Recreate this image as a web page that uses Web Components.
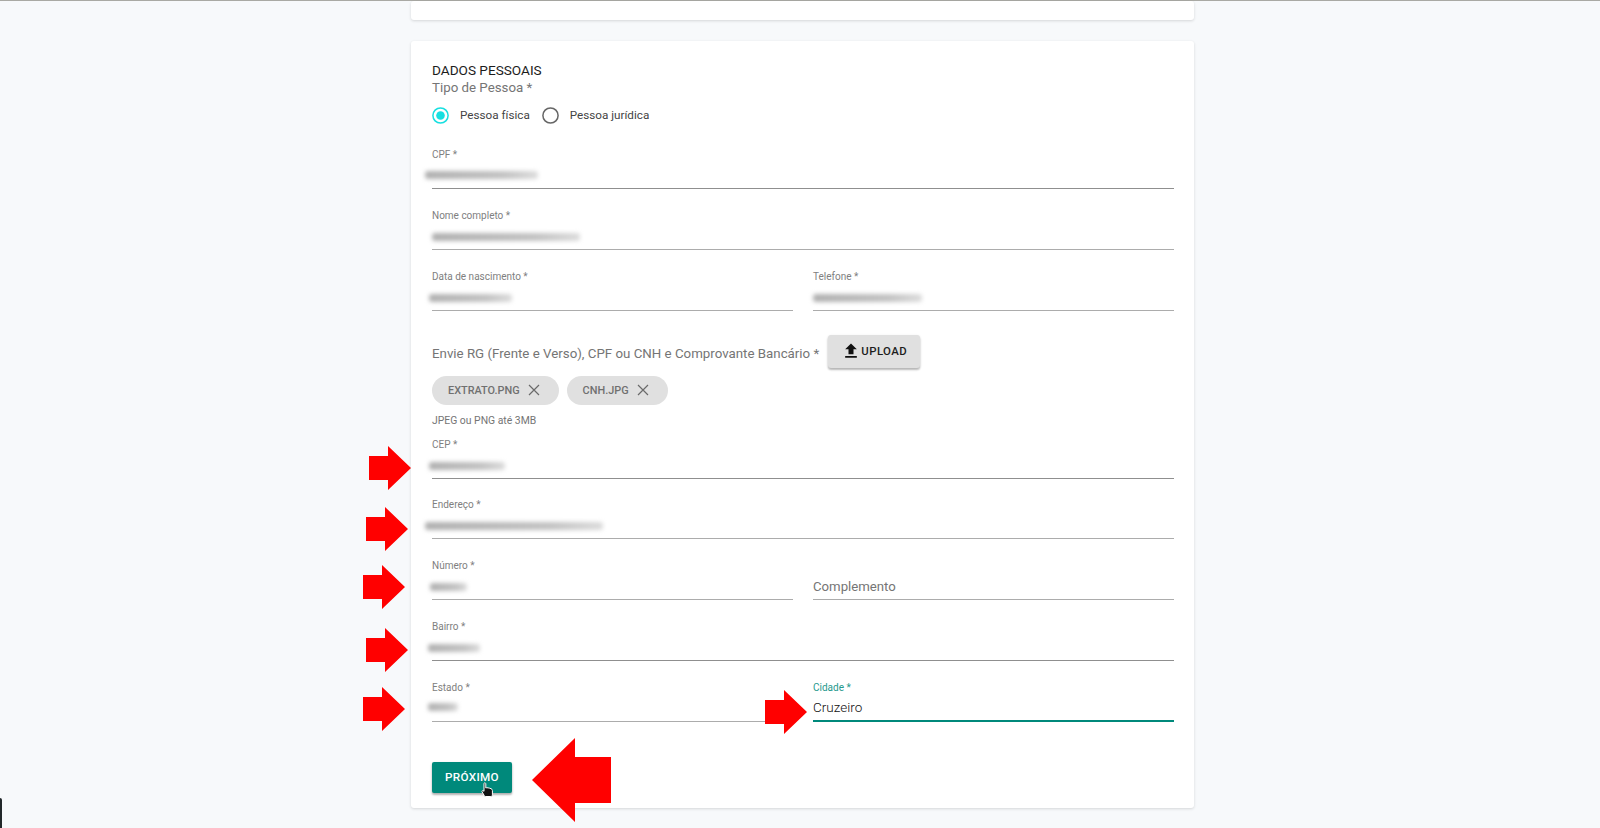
<!DOCTYPE html>
<html lang="pt-BR">
<head>
<meta charset="utf-8">
<title>Dados pessoais</title>
<style>
  html, body { margin: 0; height: 828px; overflow: hidden; }
  body {
    background: #f7f9fb;
    font-family: Roboto, "Liberation Sans", sans-serif;
    color: rgba(0, 0, 0, 0.87);
    position: relative;
  }
</style>
</head>
<body>
<form-page>
  <form-card slot="top"></form-card>
  <form-card>
    <div style="font-size:13.6px;line-height:17px;color:#1c1c1c">DADOS PESSOAIS</div>
    <div style="font-size:13.3px;line-height:17px;color:#757575">Tipo de Pessoa *</div>
    <div style="display:flex;gap:12px;margin-top:9px;height:20px">
      <radio-option checked>Pessoa física</radio-option>
      <radio-option>Pessoa jurídica</radio-option>
    </div>
    <field-row style="margin-top:23px"><text-field dark label="CPF *" blur="113" bx="-7" by="0"></text-field></field-row>
    <field-row><text-field label="Nome completo *" blur="148" bx="0" by="1"></text-field></field-row>
    <field-row>
      <text-field label="Data de nascimento *" blur="83" bx="-3" by="1"></text-field>
      <text-field label="Telefone *" blur="109" bx="0" by="1"></text-field>
    </field-row>
    <upload-row label="Envie RG (Frente e Verso), CPF ou CNH e Comprovante Bancário *">
      <file-chip>EXTRATO.PNG</file-chip>
      <file-chip>CNH.JPG</file-chip>
    </upload-row>
    <field-row class="tight"><text-field dark label="CEP *" blur="76" bx="-3" by="1"></text-field></field-row>
    <field-row><text-field label="Endereço *" blur="178" bx="-7" by="1"></text-field></field-row>
    <field-row>
      <text-field label="Número *" blur="37" bx="-2" by="1"></text-field>
      <text-field placeholder="Complemento"></text-field>
    </field-row>
    <field-row><text-field dark label="Bairro *" blur="52" bx="-4" by="1"></text-field></field-row>
    <field-row>
      <text-field label="Estado *" blur="30" bx="-4" by="-1"></text-field>
      <text-field label="Cidade *" value="Cruzeiro" focused></text-field>
    </field-row>
    <next-button>Próximo</next-button>
  </form-card>
</form-page>

<red-arrow x="369" y="446"></red-arrow>
<red-arrow x="366" y="507"></red-arrow>
<red-arrow x="363" y="565"></red-arrow>
<red-arrow x="366" y="628"></red-arrow>
<red-arrow x="363" y="687"></red-arrow>
<red-arrow x="765" y="690"></red-arrow>
<big-arrow></big-arrow>
<hand-cursor></hand-cursor>
<edge-sliver></edge-sliver>

<script>
class FormPage extends HTMLElement {
    constructor() {
        super();
        this.attachShadow({ mode: 'open' });
    }

    connectedCallback() {
        this.shadowRoot.innerHTML = `
      <style>
        :host { display: block; border-top: 1px solid #a9a9a4; }
        .col { display: flex; flex-direction: column; gap: 21px; width: 783px; margin-left: 411px; }
        ::slotted([slot="top"]) { height: 19px; padding: 0; }
      </style>
      <div class="col"><slot name="top"></slot><slot></slot></div>
    `;
    }
}

class FormCard extends HTMLElement {
    constructor() {
        super();
        this.attachShadow({ mode: 'open' });
    }

    connectedCallback() {
        this.shadowRoot.innerHTML = `
      <style>
        :host {
          display: block;
          box-sizing: border-box;
          background: #fff;
          border-radius: 3px;
          box-shadow: 0 1px 3px rgba(0, 0, 0, 0.14);
          padding: 21px 20px 15px 21px;
        }
      </style>
      <slot></slot>
    `;
    }
}

class RadioOption extends HTMLElement {
    constructor() {
        super();
        this.attachShadow({ mode: 'open' });
    }

    connectedCallback() {
        const on = this.hasAttribute('checked');
        const color = on ? '#17dfe0' : '#666666';
        this.shadowRoot.innerHTML = `
      <style>
        :host { display: flex; align-items: center; gap: 11px; font-size: 11.7px; color: #444; }
        svg { display: block; }
      </style>
      <svg width="17" height="17" viewBox="0 0 17 17" fill="none">
        <circle cx="8.5" cy="8.5" r="7.600" stroke="${color}" stroke-width="1.5"/>
        ${on ? `<circle cx="8.5" cy="8.500" r="4.300" fill="${color}"/>` : ''}
      </svg>
      <span><slot></slot></span>
    `;
    }
}

class FieldRow extends HTMLElement {
    constructor() {
        super();
        this.attachShadow({ mode: 'open' });
    }

    connectedCallback() {
        this.shadowRoot.innerHTML = `
      <style>
        :host { display: flex; gap: 20px; margin-top: 19.75px; }
        :host(.tight) { margin-top: 10px; }
        ::slotted(*) { flex: 1 1 0; min-width: 0; }
      </style>
      <slot></slot>
    `;
    }
}

class TextField extends HTMLElement {
    constructor() {
        super();
        this.attachShadow({ mode: 'open' });
    }

    connectedCallback() {
        const label = this.getAttribute('label');
        const value = this.getAttribute('value');
        const placeholder = this.getAttribute('placeholder');
        const blur = this.getAttribute('blur');
        const bx = this.getAttribute('bx') || 0;
        const by = this.getAttribute('by') || 0;
        this.shadowRoot.innerHTML = `
      <style>
        :host {
          display: block;
          box-sizing: border-box;
          height: 41px;
          border-bottom: 1px solid #acacac;
        }
        :host([dark]) { border-bottom-color: #8f8f8f; }
        :host([focused]) { border-bottom: 2px solid #00897b; }
        label { display: block; font-size: 10px; line-height: 14px; color: #808080; height: 14px; }
        :host([focused]) label { color: #26998d; }
        .value { font-size: 13.5px; font-weight: 300; line-height: 20px; margin-top: 2px; color: #111; height: 20px; }
        .placeholder { font-size: 13.2px; line-height: 20px; padding-top: 18px; color: #757575; }
        .blur {
          height: 8px;
          margin-top: 9px;
          background: linear-gradient(90deg, #b0b0b0, #c2c2c2 70%, #dcdcdc);
          filter: blur(2px);
          border-radius: 3px;
        }
      </style>
      ${label ? `<label>${label}</label>` : ''}
      ${placeholder ? `<div class="placeholder">${placeholder}</div>` : ''}
      ${value ? `<div class="value">${value}</div>` : ''}
      ${blur ? `<div class="blur" style="width:${blur}px;transform:translate(${bx}px,${by}px)"></div>` : ''}
    `;
    }
}

class UploadRow extends HTMLElement {
    constructor() {
        super();
        this.attachShadow({ mode: 'open' });
    }

    connectedCallback() {
        this.shadowRoot.innerHTML = `
      <style>
        :host { display: block; margin-top: 24px; }
        .head { display: flex; align-items: center; gap: 9px; height: 33px; }
        .text { font-size: 13.3px; color: #757575; white-space: nowrap; position: relative; top: 2px; }
        button {
          display: flex;
          align-items: center;
          justify-content: center;
          gap: 0;
          width: 92px;
          height: 33px;
          padding: 0;
          border: 0;
          border-radius: 3px;
          background: #e0e0e0;
          color: #1c1c1c;
          font: 500 11.4px Roboto, sans-serif;
          letter-spacing: 0.4px;
          box-shadow: 0 2px 2px rgba(0, 0, 0, 0.22), 0 1px 3px rgba(0, 0, 0, 0.12);
        }
        .chips { display: flex; gap: 8px; margin-top: 8px; }
        .hint { font-size: 10.4px; line-height: 14px; color: #757575; margin-top: 9px; }
      </style>
      <div class="head">
        <span class="text">${this.getAttribute('label')}</span>
        <button>
          <svg width="20" height="20" viewBox="0 0 24 24" fill="#111"><path d="M9 16h6v-6h4l-7-7-7 7h4zm-4 2h14v2H5z"/></svg>
          UPLOAD
        </button>
      </div>
      <div class="chips"><slot></slot></div>
      <div class="hint">JPEG ou PNG até 3MB</div>
    `;
    }
}

class FileChip extends HTMLElement {
    constructor() {
        super();
        this.attachShadow({ mode: 'open' });
    }

    connectedCallback() {
        this.shadowRoot.innerHTML = `
      <style>
        :host {
          display: flex;
          align-items: center;
          gap: 8px;
          height: 29px;
          padding: 0 19px 0 16px;
          border-radius: 15px;
          background: #e0e0e0;
          color: #707070;
          font-size: 10.9px;
          font-weight: 500;
        }
        svg { display: block; }
      </style>
      <slot></slot>
      <svg width="12" height="12" viewBox="0 0 12 12" stroke="#6a6a6a" stroke-width="1.2" fill="none"><path d="M1 1l10 10M11 1L1 11"/></svg>
    `;
    }
}

class NextButton extends HTMLElement {
    constructor() {
        super();
        this.attachShadow({ mode: 'open' });
    }

    connectedCallback() {
        this.shadowRoot.innerHTML = `
      <style>
        :host { display: block; margin-top: 40px; }
        button {
          display: block;
          width: 80px;
          height: 31px;
          padding: 0;
          border: 0;
          border-radius: 2px;
          background: #00897b;
          color: #fff;
          font: 500 11.7px Roboto, sans-serif;
          letter-spacing: 0.3px;
          text-transform: uppercase;
          box-shadow: 0 2px 2px rgba(0, 0, 0, 0.24), 0 1px 3px rgba(0, 0, 0, 0.14);
        }
      </style>
      <button><slot></slot></button>
    `;
    }
}

// the annotations below were pasted over the screenshot, so they sit on a free canvas
class RedArrow extends HTMLElement {
    constructor() {
        super();
        this.attachShadow({ mode: 'open' });
    }

    connectedCallback() {
        this.shadowRoot.innerHTML = `
      <style>
        :host { position: absolute; left: ${this.getAttribute('x')}px; top: ${this.getAttribute('y')}px; display: block; line-height: 0; }
      </style>
      <svg width="42" height="44" viewBox="0 0 42 44"><path fill="#ff0000" d="M0 10h19V0l23 22-23 22V34H0z"/></svg>
    `;
    }
}

class BigArrow extends HTMLElement {
    constructor() {
        super();
        this.attachShadow({ mode: 'open' });
    }

    connectedCallback() {
        this.shadowRoot.innerHTML = `
      <style>
        :host { position: absolute; left: 532px; top: 738px; display: block; line-height: 0; }
      </style>
      <svg width="79" height="84" viewBox="0 0 79 84"><path fill="#ff0000" d="M79 19H43V0L0 42l43 42V65h36z"/></svg>
    `;
    }
}

class HandCursor extends HTMLElement {
    constructor() {
        super();
        this.attachShadow({ mode: 'open' });
    }

    connectedCallback() {
        this.shadowRoot.innerHTML = `
      <style>
        :host { position: absolute; left: 481px; top: 782px; display: block; line-height: 0; }
      </style>
      <svg width="14" height="16" viewBox="0 0 14 16">
        <path fill="#111" stroke="#fff" stroke-width="1" stroke-linejoin="round"
          d="M3 1.2c.6-.6 1.6-.4 1.800.5V6l1-.3 1.400.2 1.400.3 1.400.5c.9.3 1.400.9 1.400 1.800v4.400c0 1-.7 1.600-1.600 1.600H4.600c-.6 0-1-.3-1.300-.8L1 9.800c-.3-.7.4-1.500 1.200-1.100l.8.6V1.900z"/>
      </svg>
    `;
    }
}

class EdgeSliver extends HTMLElement {
    constructor() {
        super();
        this.attachShadow({ mode: 'open' });
    }

    connectedCallback() {
        this.shadowRoot.innerHTML = `
      <style>
        :host { position: absolute; left: 0; top: 798px; width: 2px; height: 30px; background: #22282a; border-top-right-radius: 2px; display: block; }
      </style>
    `;
    }
}

customElements.define('form-page', FormPage);
customElements.define('form-card', FormCard);
customElements.define('radio-option', RadioOption);
customElements.define('field-row', FieldRow);
customElements.define('text-field', TextField);
customElements.define('upload-row', UploadRow);
customElements.define('file-chip', FileChip);
customElements.define('next-button', NextButton);
customElements.define('red-arrow', RedArrow);
customElements.define('big-arrow', BigArrow);
customElements.define('hand-cursor', HandCursor);
customElements.define('edge-sliver', EdgeSliver);
</script>
</body>
</html>
